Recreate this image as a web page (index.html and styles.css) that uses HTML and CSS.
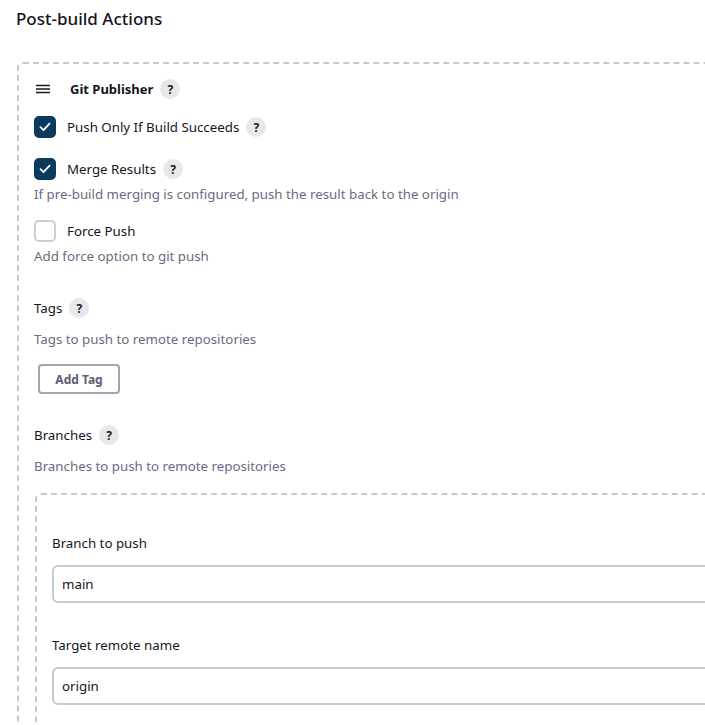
FILE: index.html
```html
<!DOCTYPE html>
<html lang="en">
<head>
<meta charset="utf-8">
<title>Post-build Actions</title>
<link rel="stylesheet" href="styles.css">
</head>
<body>
<h2 class="title">Post-build Actions</h2>
<div class="box outer">
  <div class="head-row">
    <svg class="drag" width="18" height="12" viewBox="0 0 18 12"><path d="M2 2.5h14M2 6h14M2 9.5h14" stroke="#1a1a24" stroke-width="1.6" fill="none"/></svg>
    <span class="head-title">Git Publisher</span>
    <span class="help">?</span>
  </div>

  <div class="cb-row r1">
    <span class="cb checked"><svg width="12" height="10" viewBox="0 0 12 10"><path d="M1.5 5.2l3 3 6-6.5" stroke="#fff" stroke-width="1.8" fill="none" stroke-linecap="round" stroke-linejoin="round"/></svg></span>
    <span class="cb-label">Push Only If Build Succeeds</span>
    <span class="help">?</span>
  </div>

  <div class="cb-row r2">
    <span class="cb checked"><svg width="12" height="10" viewBox="0 0 12 10"><path d="M1.5 5.2l3 3 6-6.5" stroke="#fff" stroke-width="1.8" fill="none" stroke-linecap="round" stroke-linejoin="round"/></svg></span>
    <span class="cb-label">Merge Results</span>
    <span class="help">?</span>
  </div>
  <div class="desc d-tight">If pre-build merging is configured, push the result back to the origin</div>

  <div class="cb-row r3">
    <span class="cb"></span>
    <span class="cb-label">Force Push</span>
  </div>
  <div class="desc d-tight">Add force option to git push</div>

  <div class="field-head fh1">
    <span class="field-label">Tags</span>
    <span class="help">?</span>
  </div>
  <div class="desc d-field">Tags to push to remote repositories</div>
  <button class="btn">Add Tag</button>

  <div class="field-head fh2">
    <span class="field-label">Branches</span>
    <span class="help">?</span>
  </div>
  <div class="desc d-field">Branches to push to remote repositories</div>

  <div class="box inner">
    <div class="in-label">Branch to push</div>
    <div class="input">main</div>
    <div class="in-label l2">Target remote name</div>
    <div class="input">origin</div>
  </div>
</div>
</body>
</html>
```

FILE: styles.css
```css
html, body {
  margin: 0;
  padding: 0;
  background: #fff;
  overflow: hidden;
}
body {
  font-family: "Noto Sans", "Open Sans", sans-serif;
  color: #14141f;
  font-size: 13.3px;
  padding: 0 0 0 16px;
  width: 689px;
  height: 725px;
}
.title {
  margin: 0;
  font-size: 17px;
  font-weight: 500;
  line-height: 24px;
  padding-top: 7px;
  height: 24px;
}
.box {
  border: 2px dashed #c4cbcf;
  border-radius: 6px;
}
.outer {
  margin-top: 31px;
  margin-left: 1px;
  margin-right: -20px;
  padding: 13px 0 0 15px;
  height: 700px;
}
.head-row {
  display: flex;
  align-items: center;
  height: 24px;
}
.drag {
  margin-right: 18px;
}
.head-title {
  font-weight: 700;
  font-size: 13px;
  margin-right: 7px;
}
.help {
  display: inline-flex;
  align-items: center;
  justify-content: center;
  width: 20px;
  height: 20px;
  border-radius: 50%;
  background: #e8e8eb;
  font-size: 12px;
  font-weight: 700;
  color: #1a1a24;
}
.cb-row {
  display: flex;
  align-items: center;
  height: 22px;
}
.r1 { margin-top: 15px; }
.r2 { margin-top: 20px; }
.r3 { margin-top: 16px; }
.cb {
  box-sizing: border-box;
  width: 22px;
  height: 22px;
  border-radius: 5px;
  border: 2px solid #c9d0d4;
  display: inline-flex;
  align-items: center;
  justify-content: center;
  margin-right: 11px;
}
.cb.checked {
  background: #0b3a5f;
  border-color: #0b3a5f;
}
.cb-label {
  margin-right: 7px;
}
.desc {
  color: #6b6a80;
  line-height: 20px;
  height: 20px;
}
.d-tight { margin-top: 4px; }
.d-field { margin-top: 11px; }
.field-head {
  display: flex;
  align-items: center;
  height: 20px;
}
.fh1 { margin-top: 32px; }
.fh2 { margin-top: 31px; }
.field-label {
  margin-right: 7px;
}
.btn {
  display: block;
  margin: 15px 0 0 4px;
  box-sizing: border-box;
  width: 82px;
  height: 30px;
  border: 2px solid #9ca7ae;
  border-radius: 4px;
  background: #fff;
  font-family: inherit;
  font-weight: 700;
  font-size: 12px;
  color: #5d5c72;
  padding: 0;
}
.inner {
  margin-top: 17px;
  margin-left: 1px;
  padding: 38px 0 0 15px;
  height: 260px;
}
.in-label {
  line-height: 20px;
  height: 20px;
}
.l2 { margin-top: 32px; }
.input {
  margin-top: 12px;
  box-sizing: border-box;
  height: 38px;
  border: 2px solid #c4cbcf;
  border-radius: 6px;
  padding: 0 8px;
  line-height: 34px;
}
```
